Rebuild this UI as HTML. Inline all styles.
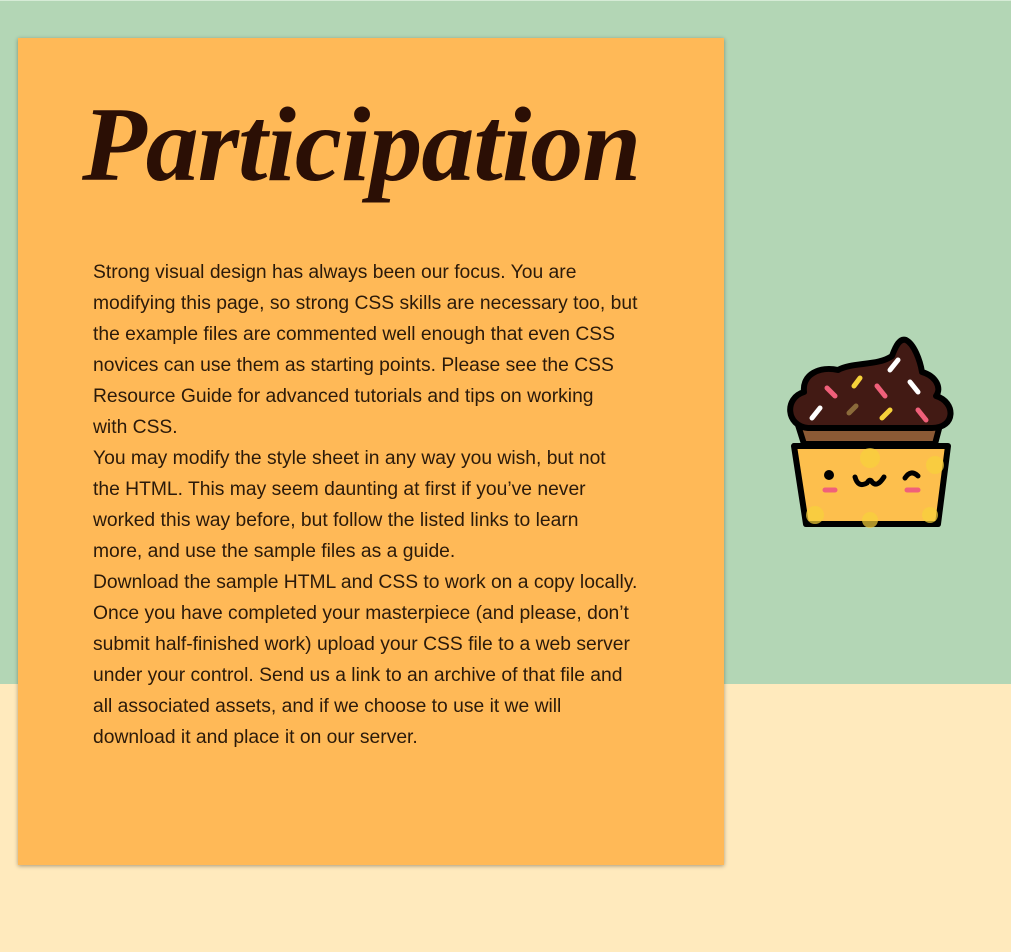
<!DOCTYPE html>
<html><head><meta charset="utf-8"><style>
html,body{margin:0;padding:0;}
body{width:1011px;height:952px;position:relative;overflow:hidden;background:#ffeabd;font-family:"Liberation Sans",sans-serif;}
.top{position:absolute;left:0;top:0;width:1011px;height:684px;background:#b3d6b5;border-top:1px solid #d6ebd6;box-sizing:border-box;}
.card{position:absolute;left:18px;top:38px;width:706px;height:827px;background:#ffb957;box-shadow:0 1px 4px rgba(0,0,0,.35);}
h1{position:absolute;left:64px;top:46px;margin:0;font-family:"Liberation Serif",serif;font-style:italic;font-weight:bold;font-size:106px;color:#2b0f05;letter-spacing:-1px;white-space:nowrap;}
.txt{position:absolute;left:75px;top:219px;font-size:19.3px;line-height:31px;color:#2b1a0a;white-space:nowrap;}
svg{position:absolute;left:780px;top:330px;}
</style></head><body>
<div class="top"></div>
<div class="card">
<h1>Participation</h1>
<div class="txt">Strong visual design has always been our focus. You are<br>modifying this page, so strong CSS skills are necessary too, but<br>the example files are commented well enough that even CSS<br>novices can use them as starting points. Please see the CSS<br>Resource Guide for advanced tutorials and tips on working<br>with CSS.<br>You may modify the style sheet in any way you wish, but not<br>the HTML. This may seem daunting at first if you’ve never<br>worked this way before, but follow the listed links to learn<br>more, and use the sample files as a guide.<br>Download the sample HTML and CSS to work on a copy locally.<br>Once you have completed your masterpiece (and please, don’t<br>submit half-finished work) upload your CSS file to a web server<br>under your control. Send us a link to an archive of that file and<br>all associated assets, and if we choose to use it we will<br>download it and place it on our server.</div>
</div>
<svg width="180" height="200" viewBox="0 0 180 200">
<path d="M18 95 L160 95 L155 114 L24 114 Z" fill="#8b5a35" stroke="#000" stroke-width="6" stroke-linejoin="round"/>
<path d="M14 116 L168 116 L158 194 L26 194 Z" fill="#fdbf4d" stroke="#000" stroke-width="6" stroke-linejoin="round"/>
<circle cx="90" cy="128" r="10" fill="#f7d23a" opacity=".7"/>
<circle cx="155" cy="135" r="9" fill="#f7d23a" opacity=".7"/>
<circle cx="35" cy="185" r="9" fill="#f7d23a" opacity=".7"/>
<circle cx="90" cy="190" r="8" fill="#f7d23a" opacity=".7"/>
<circle cx="150" cy="185" r="8" fill="#f7d23a" opacity=".7"/>
<path d="M28 98 C6 96 4 68 24 62 C22 44 40 36 58 40 C72 32 98 36 112 26 C116 15 120 8 126 10 C134 14 140 30 142 42 C156 46 162 58 156 66 C176 72 176 98 152 98 Z" fill="#421a14" stroke="#000" stroke-width="6" stroke-linejoin="round"/>
<g stroke-width="5" stroke-linecap="round">
<line x1="118" y1="30" x2="110" y2="40" stroke="#fff"/>
<line x1="130" y1="52" x2="138" y2="62" stroke="#fff"/>
<line x1="40" y1="78" x2="32" y2="88" stroke="#fff"/>
<line x1="47" y1="58" x2="55" y2="66" stroke="#f0607a"/>
<line x1="97" y1="56" x2="105" y2="66" stroke="#f0607a"/>
<line x1="138" y1="80" x2="146" y2="90" stroke="#f0607a"/>
<line x1="80" y1="48" x2="74" y2="56" stroke="#f7d23a"/>
<line x1="110" y1="80" x2="102" y2="88" stroke="#f7d23a"/>
<line x1="76" y1="76" x2="69" y2="83" stroke="#8b6a3a"/>
</g>
<circle cx="49" cy="145" r="5" fill="#000"/>
<path d="M75 147 Q78 158 87 153 Q90 148 92 152 Q97 158 104 147" fill="none" stroke="#000" stroke-width="5" stroke-linecap="round"/>
<path d="M125 148 Q131 139 138 146" fill="none" stroke="#000" stroke-width="5" stroke-linecap="round"/>
<line x1="45" y1="160" x2="55" y2="160" stroke="#f0607a" stroke-width="5" stroke-linecap="round"/>
<line x1="127" y1="160" x2="138" y2="160" stroke="#f0607a" stroke-width="5" stroke-linecap="round"/>
</svg>
</body></html>
